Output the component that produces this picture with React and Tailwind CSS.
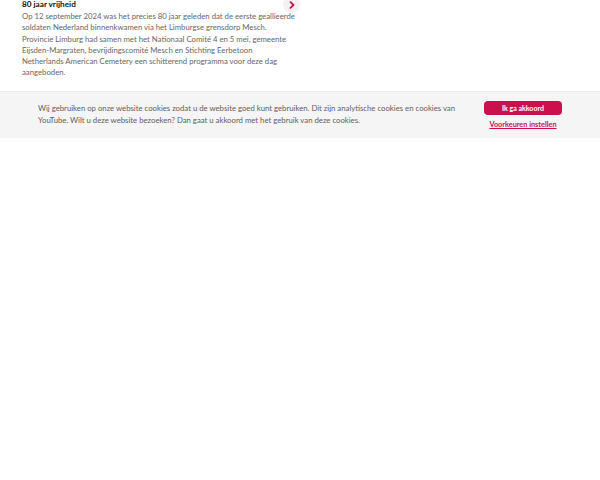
const body = [
  'Op 12 september 2024 was het precies 80 jaar geleden dat de eerste geallieerde',
  'soldaten Nederland binnenkwamen via het Limburgse grensdorp Mesch.',
  'Provincie Limburg had samen met het Nationaal Comité 4 en 5 mei, gemeente',
  'Eijsden-Margraten, bevrijdingscomité Mesch en Stichting Eerbetoon',
  'Netherlands American Cemetery een schitterend programma voor deze dag',
  'aangeboden.',
]

const App = () => {
  return (
    <div className="min-h-screen bg-white" style={{ fontFamily: 'Lato, "Open Sans", sans-serif' }}>
      <div className="relative ml-[22px] w-[274px] -mt-[3px]">
        <h3 className="text-[8.2px] font-bold leading-[14px] text-[#111]">80 jaar vrijheid</h3>
        <p className="whitespace-nowrap text-[7.75px] leading-[11.3px] text-[#666]">
          {body.map((line, i) => (
            <span key={i} className="block">{line}</span>
          ))}
        </p>
        <div className="absolute right-[-4px] top-[-1px] flex h-[17px] w-[17px] items-center justify-center rounded-full bg-[#f6f0f2]">
          <svg width="8" height="8" viewBox="0 0 8 8" fill="none">
            <path d="M2.5 1.2 L5.5 4 L2.5 6.8" stroke="#cc0f4d" strokeWidth="1.8" strokeLinecap="round" strokeLinejoin="round" />
          </svg>
        </div>
      </div>

      <div className="mt-[12px] flex h-[47px] items-center border-t border-[#ececec] bg-[#f5f5f5] pl-[38px]">
        <p className="w-[432px] text-[7.75px] leading-[11.3px] text-[#5e5e5e]">
          Wij gebruiken op onze website cookies zodat u de website goed kunt gebruiken. Dit zijn analytische cookies en cookies van YouTube. Wilt u deze website bezoeken? Dan gaat u akkoord met het gebruik van deze cookies.
        </p>
        <div className="ml-[14px] mt-[3px] flex flex-col items-center">
          <button className="flex h-[14px] w-[78px] items-center justify-center rounded-[4px] bg-[#cc0f4d] text-[7px] font-bold text-white">
            Ik ga akkoord
          </button>
          <a className="mt-[5px] text-[7.3px] font-bold text-[#cc0f4d] underline">Voorkeuren instellen</a>
        </div>
      </div>
    </div>
  )
}

export default App
